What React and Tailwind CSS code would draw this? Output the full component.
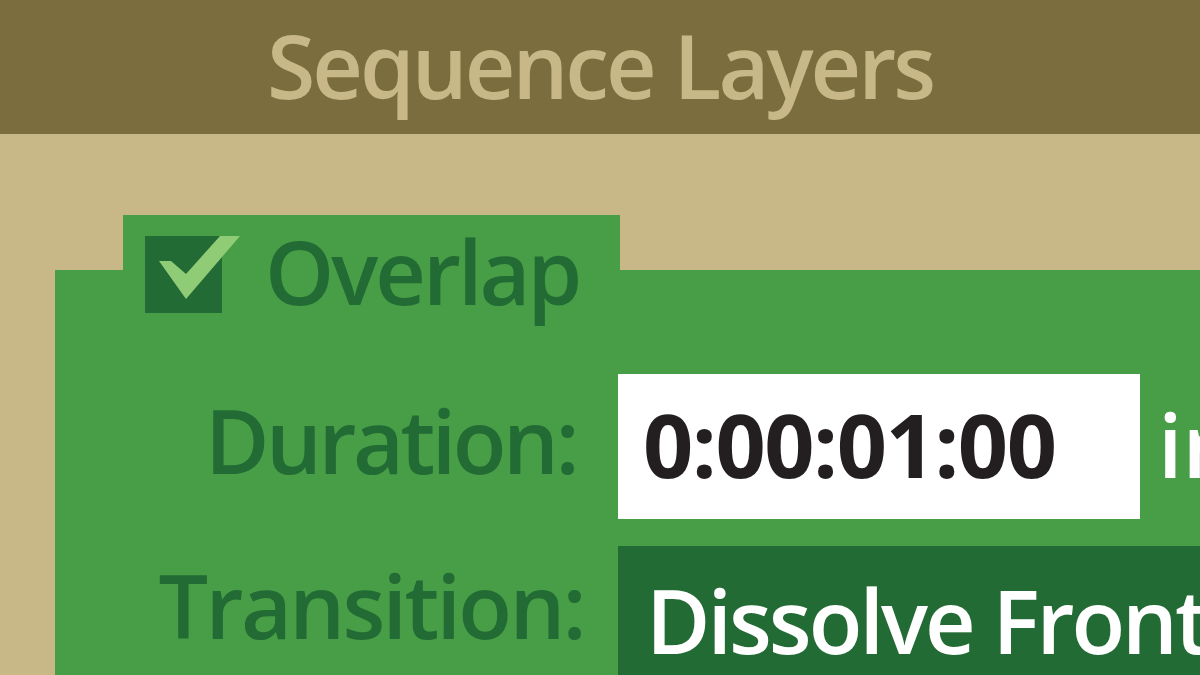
import React from 'react';

const font = { fontFamily: '"Open Sans", "Noto Sans", sans-serif' };

const CheckBox = () => (
  <div className="relative w-[77px] h-[77px] shrink-0 bg-[#236b34]">
    <svg className="absolute left-0 top-0 overflow-visible" width="77" height="77" viewBox="0 0 77 77">
      <polygon points="14,25 26,25 41,38 75,0 95,0 41,63" fill="#90cb76" />
    </svg>
  </div>
);

export default function App() {
  return (
    <div
      className="w-[1200px] h-[675px] overflow-hidden bg-[#c8b887] flex flex-col"
      style={font}
    >
      {/* Header */}
      <div className="h-[134px] shrink-0 bg-[#7b6d3d] flex items-center justify-center pb-[4px]">
        <h1 className="text-[88px] leading-none font-semibold text-[#c8b887] tracking-[-3px]">
          Sequence Layers
        </h1>
      </div>

      {/* Panel with tab */}
      <div className="flex flex-col pt-[81px] pl-[55px] flex-1">
        <div className="ml-[68px] w-[497px] h-[55px] shrink-0 bg-[#479e46]" />
        <div className="flex-1 bg-[#479e46] flex flex-col">
          {/* Overlap row */}
          <div className="mt-[-34px] ml-[90px] h-[77px] flex items-start">
            <CheckBox />
            <span className="ml-[43px] mt-[-9px] text-[88px] leading-none font-semibold text-[#236b34] tracking-[-3px]">
              Overlap
            </span>
          </div>

          {/* Duration row */}
          <div className="mt-[61px] flex items-start">
            <div className="w-[523px] shrink-0 text-right pr-[2px]">
              <span className="inline-block mt-[22px] text-[88px] leading-none font-semibold text-[#236b34] tracking-[-3.5px]">
                Duration:
              </span>
            </div>
            <div className="ml-[40px] w-[522px] h-[145px] shrink-0 bg-white pl-[25px] pt-[26px]">
              <span className="text-[88px] leading-none font-bold text-[#231f20] tracking-[-1.5px]">
                0:00:01:00
              </span>
            </div>
            <span className="ml-[18px] mt-[26px] text-[88px] leading-none font-semibold text-white whitespace-nowrap">
              in
            </span>
          </div>

          {/* Transition row */}
          <div className="mt-[27px] flex items-start">
            <div className="w-[523px] shrink-0 text-right">
              <span className="inline-block mr-[-6px] mt-[15px] text-[88px] leading-none font-semibold text-[#236b34] tracking-[-2.7px]">
                Transition:
              </span>
            </div>
            <div className="ml-[40px] h-[140px] flex-1 bg-[#236b34] pl-[28px] pt-[30px] overflow-hidden">
              <span className="text-[88px] leading-none font-semibold text-white whitespace-nowrap tracking-[-3px]">
                Dissolve Front
              </span>
            </div>
          </div>
        </div>
      </div>
    </div>
  );
}
